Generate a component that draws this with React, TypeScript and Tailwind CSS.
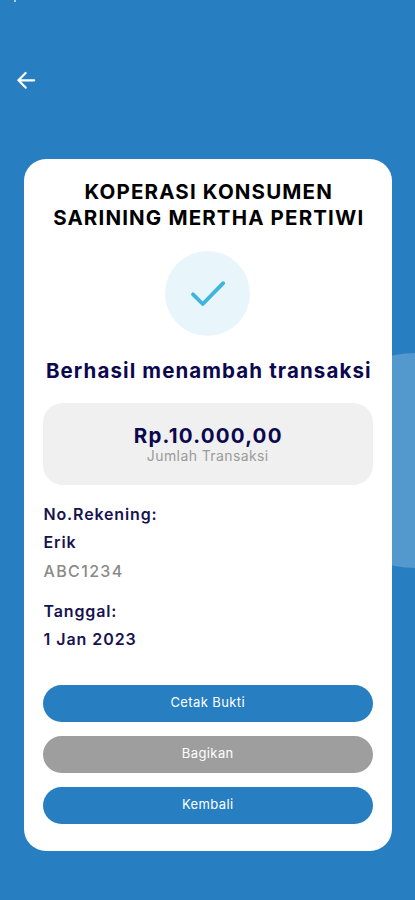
import React from "react";

function BackArrow() {
  return (
    <svg width="20" height="18" viewBox="0 0 20 18" fill="none" stroke="#fff" strokeWidth="2.2" strokeLinecap="round" strokeLinejoin="round">
      <path d="M18.2 9.3H2.4M9.6 2L2.4 9.3l7.2 7.3" />
    </svg>
  );
}

function Check() {
  return (
    <svg width="36" height="28" viewBox="0 0 36 28" fill="none" stroke="#3fb4df" strokeWidth="3.8" strokeLinecap="round" strokeLinejoin="round">
      <path d="M3 14.3L12.8 24L33.2 3.2" />
    </svg>
  );
}

function ActionButton({ label, className }: { label: string; className: string }) {
  return (
    <button className={`flex h-[37px] w-full items-center justify-center rounded-full text-[13px] tracking-[0.4px] text-white ${className}`}>
      {label}
    </button>
  );
}

export default function App() {
  return (
    <div className="relative flex h-[900px] w-[415px] flex-col overflow-hidden bg-[#277fc2] font-['Inter',sans-serif]">
      <div className="absolute top-0 left-[14px] h-[2px] w-[2px] bg-[#a9cde8]" />
      <div className="absolute top-[353px] left-[308px] h-[215px] w-[215px] rounded-full bg-[#5399cd]" />
      <header className="flex h-[159px] shrink-0 pt-[71px] pl-4">
        <BackArrow />
      </header>
      <main className="relative mr-[23px] ml-[23.5px] flex h-[692px] flex-col rounded-[22px] bg-white px-[19.5px] pt-[20px]">
        <h1 className="-mr-[10px] -ml-2 text-center text-[20.5px] leading-[26px] font-bold tracking-[1.15px] whitespace-nowrap text-black">
          <span className="block">KOPERASI KONSUMEN</span>
          <span className="block">SARINING MERTHA PERTIWI</span>
        </h1>
        <div className="mt-[20px] flex h-[85px] w-[85px] items-center justify-center self-center rounded-full bg-[#e8f6fc]">
          <Check />
        </div>
        <h2 className="-mr-[10px] -ml-2 mt-[22px] text-center text-[20.5px] leading-[26px] font-bold tracking-[1.1px] whitespace-nowrap text-[#0b0850]">
          Berhasil menambah transaksi
        </h2>
        <section className="mt-[19px] flex h-[82px] shrink-0 flex-col items-center rounded-[20px] bg-[#f0f0f0] pt-[20px]">
          <p className="pl-px text-[20.5px] leading-[25px] font-bold tracking-[1.2px] text-[#0b0850]">Rp.10.000,00</p>
          <p className="-mt-px text-[14px] leading-[18px] tracking-[0.4px] text-[#9b9b9b]">Jumlah Transaksi</p>
        </section>
        <dl className="mt-[15px] pl-[0.5px] text-[16px] leading-[29px] font-semibold tracking-[0.85px] text-[#17134f]">
          <dt>No.Rekening:</dt>
          <dd className="-mt-px">Erik</dd>
          <dd className="font-medium tracking-[1.35px] text-[#8a8a8a]">ABC1234</dd>
          <dt className="mt-[11px]">Tanggal:</dt>
          <dd className="-mt-px tracking-[0.95px]">1 Jan 2023</dd>
        </dl>
        <div className="mt-[30.5px] flex flex-col gap-[14px]">
          <ActionButton label="Cetak Bukti" className="bg-[#277fc2]" />
          <ActionButton label="Bagikan" className="bg-[#9e9e9e]" />
          <ActionButton label="Kembali" className="bg-[#277fc2]" />
        </div>
      </main>
    </div>
  );
}
